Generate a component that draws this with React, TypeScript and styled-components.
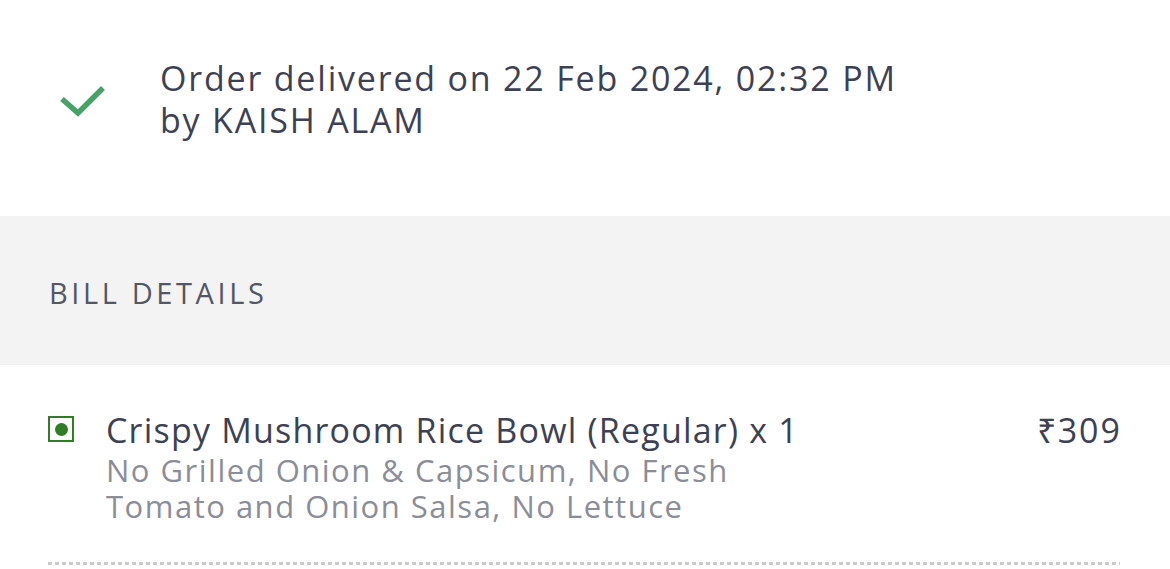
import styled, { createGlobalStyle } from 'styled-components';

const GlobalStyle = createGlobalStyle`
    html, body {
        margin: 0;
        padding: 0;
        background: #ffffff;
    }
    body {
        font-family: 'Open Sans', 'Liberation Sans', sans-serif;
        color: #3d4152;
    }
`;

const Page = styled.div`
    width: 1170px;
    height: 569px;
    overflow: hidden;
    background: #ffffff;
`;

const Status = styled.section`
    display: flex;
    align-items: center;
    height: 216px;
    padding: 0 0 0 58px;
    box-sizing: border-box;
`;

const CheckWrap = styled.div`
    flex: none;
    display: flex;
    margin-top: -14px;
    margin-right: 54px;
`;

const StatusText = styled.p`
    margin: -18px 0 0;
    font-size: 34px;
    line-height: 42px;
    letter-spacing: 1.8px;
    color: #3d4152;
`;

const Band = styled.div`
    height: 149px;
    background: #f3f3f3;
    display: flex;
    align-items: center;
    padding-left: 49px;
`;

const BandTitle = styled.h3`
    margin: 4px 0 0;
    font-size: 29px;
    font-weight: 400;
    letter-spacing: 3.6px;
    color: #535665;
    text-transform: uppercase;
`;

const Bill = styled.section`
    padding: 0 48px 0 48px;
`;

const ItemRow = styled.div`
    display: flex;
    align-items: flex-start;
    padding: 44px 0 41px;
    position: relative;

    &::after {
        content: '';
        position: absolute;
        left: 0;
        right: 2px;
        bottom: 0;
        height: 3px;
        background-image: linear-gradient(to right, #c9cace 0 4px, transparent 4px 7px);
        background-size: 7px 3px;
        background-repeat: repeat-x;
    }
`;

const VegMark = styled.span`
    flex: none;
    width: 26px;
    height: 26px;
    border: 2px solid #2f7d24;
    box-sizing: border-box;
    display: flex;
    align-items: center;
    justify-content: center;
    margin-top: 7px;
    margin-right: 32px;

    &::after {
        content: '';
        width: 13px;
        height: 13px;
        border-radius: 50%;
        background: #2f7d24;
    }
`;

const ItemBody = styled.div`
    flex: 1;
`;

const ItemName = styled.div`
    font-size: 34px;
    line-height: 42px;
    letter-spacing: 1.2px;
    color: #3d4152;
`;

const ItemNote = styled.div`
    font-size: 31px;
    line-height: 36px;
    letter-spacing: 1.5px;
    color: #8b8d97;
    max-width: 660px;
    margin-top: 1px;
`;

const Price = styled.div`
    font-size: 34px;
    line-height: 42px;
    letter-spacing: 2px;
    color: #3d4152;
`;

const Check = () => (
    <svg width="48" height="34" viewBox="0 0 48 34" fill="none">
        <path d="M4 15 L20 29 L45 4" stroke="#48a168" strokeWidth="5.5" strokeLinejoin="miter" />
    </svg>
);

export default function App() {
    return (
        <Page>
            <GlobalStyle />
            <Status>
                <CheckWrap>
                    <Check />
                </CheckWrap>
                <StatusText>
                    Order delivered on 22 Feb 2024, 02:32 PM
                    <br />
                    by KAISH ALAM
                </StatusText>
            </Status>
            <Band>
                <BandTitle>Bill Details</BandTitle>
            </Band>
            <Bill>
                <ItemRow>
                    <VegMark />
                    <ItemBody>
                        <ItemName>Crispy Mushroom Rice Bowl (Regular) x 1</ItemName>
                        <ItemNote>No Grilled Onion &amp; Capsicum, No Fresh Tomato and Onion Salsa, No Lettuce</ItemNote>
                    </ItemBody>
                    <Price>₹309</Price>
                </ItemRow>
            </Bill>
        </Page>
    );
}
